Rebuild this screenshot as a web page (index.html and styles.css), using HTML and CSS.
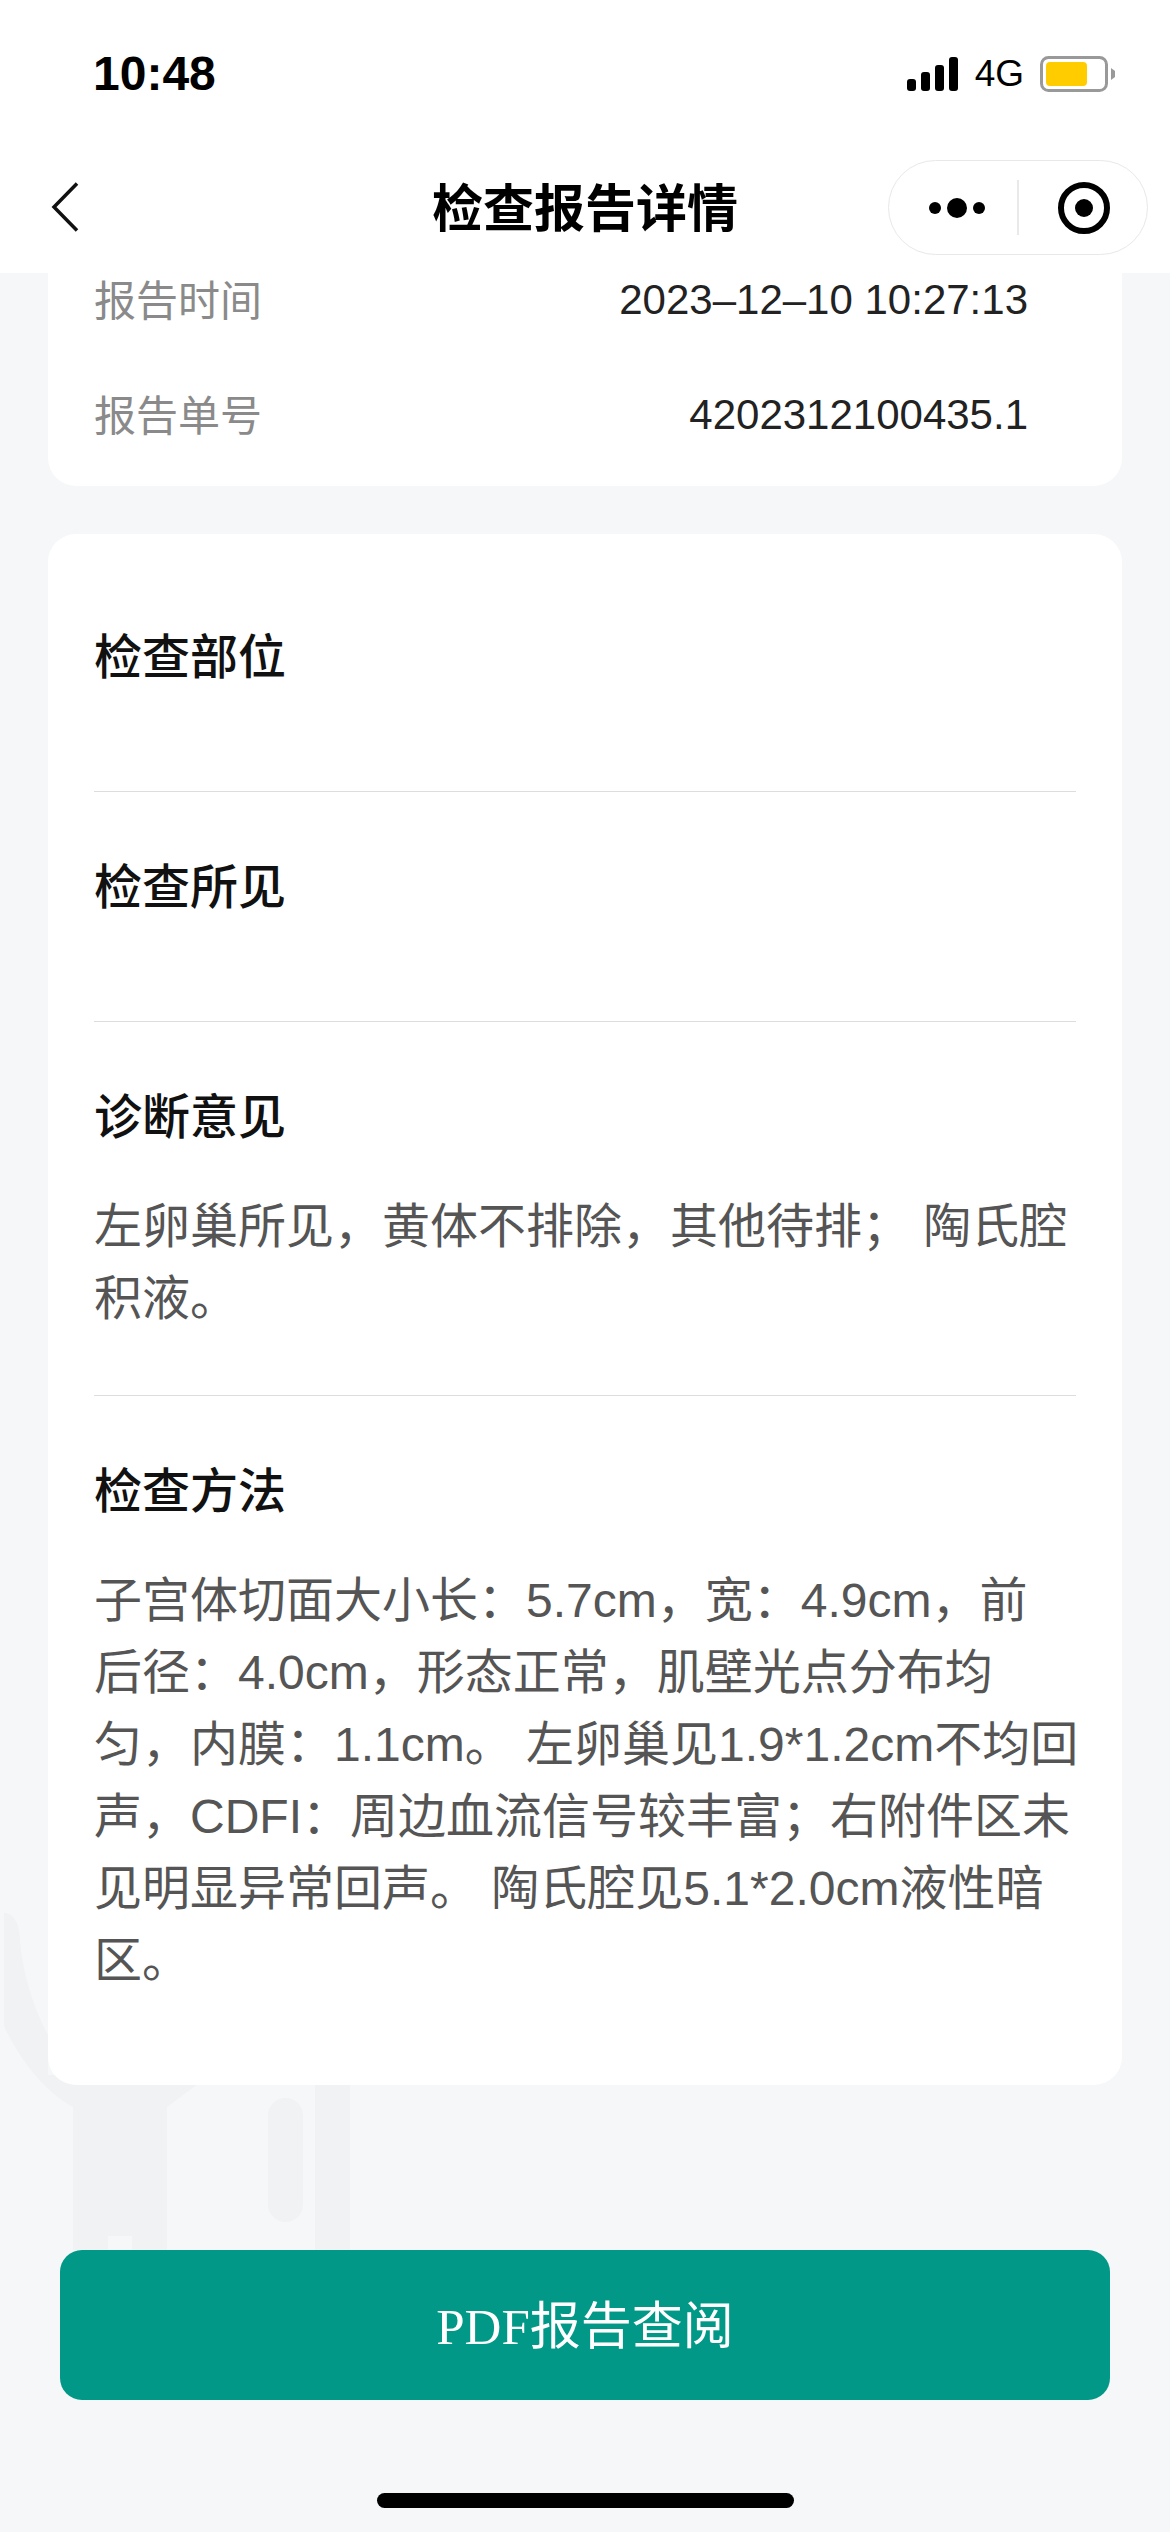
FILE: index.html
```html
<!DOCTYPE html>
<html lang="zh-CN">
<head>
  <meta charset="utf-8">
  <title>检查报告详情</title>
  <link rel="stylesheet" href="styles.css">
</head>
<body>
  <div id="app-container">
    <div class="app-header">
      <div class="status-bar">
        <div class="status-time">10:48</div>
        <div class="status-icons">
          <svg class="icon-signal" width="51" height="34" viewBox="0 0 51 34">
            <rect x="0" y="22" width="9" height="12" rx="3"/>
            <rect x="14" y="15" width="9" height="19" rx="3"/>
            <rect x="28" y="8" width="9" height="26" rx="3"/>
            <rect x="42" y="0" width="9" height="34" rx="3"/>
          </svg>
          <span class="status-net">4G</span>
          <svg class="icon-battery" width="75" height="36" viewBox="0 0 75 36">
            <rect x="1.500" y="1.500" width="65" height="33" rx="7" fill="none" stroke="#999" stroke-width="3"/>
            <rect x="6" y="6" width="41" height="24" rx="4" fill="#ffcc00"/>
            <path d="M71 12 L75 15 V21 L71 24 Z" fill="#999"/>
          </svg>
        </div>
      </div>
      <div class="nav-bar">
        <svg class="nav-back" width="28" height="50" viewBox="0 0 28 50">
          <path d="M26 1.500 L3 25 L26 48.500" fill="none" stroke="#111" stroke-width="3.500"/>
        </svg>
        <div class="nav-title">检查报告详情</div>
        <div class="capsule">
          <svg width="260" height="95" viewBox="0 0 260 95">
            <circle cx="47" cy="48" r="6"/>
            <circle cx="69" cy="48" r="10"/>
            <circle cx="91" cy="48" r="6"/>
            <rect x="129.500" y="20" width="1" height="55" fill="#d4d4d4"/>
            <circle cx="196" cy="48" r="23" fill="none" stroke="#000" stroke-width="6"/>
            <circle cx="196" cy="48" r="9"/>
          </svg>
        </div>
      </div>
    </div>

    <div class="content">
      <!-- Fondo decorativo -->
      <svg class="watermark" width="360" height="350" viewBox="0 1900 360 350">
        <path d="M4 1913 C14 1913 20 1925 20 1940 C22 1970 32 2005 48 2035 L48 2075 L210 2075 L167 2107 L167 2250 L73 2250 L73 2107 C45 2092 20 2060 4 2026 Z" fill="#f1f2f4"/>
        <rect x="108" y="2236" width="24" height="14" fill="#f6f7f9"/>
        <rect x="268" y="2098" width="35" height="124" rx="17.500" fill="#f1f2f4"/>
        <rect x="315" y="2075" width="35" height="175" fill="#f1f2f4"/>
      </svg>

      <div class="card card-info">
        <div class="info-row">
          <div class="info-label">报告时间</div>
          <div class="info-value">2023–12–10 10:27:13</div>
        </div>
        <div class="info-row">
          <div class="info-label">报告单号</div>
          <div class="info-value">4202312100435.1</div>
        </div>
      </div>

      <div class="card card-report">
        <div class="section">
          <div class="section-title">检查部位</div>
        </div>
        <div class="section">
          <div class="section-title">检查所见</div>
        </div>
        <div class="section">
          <div class="section-title">诊断意见</div>
          <div class="section-text">左卵巢所见，黄体不排除，其他待排； 陶氏腔<br>积液。</div>
        </div>
        <div class="section">
          <div class="section-title">检查方法</div>
          <div class="section-text">子宫体切面大小长：5.7cm，宽：4.9cm，前<br>后径：4.0cm，形态正常，肌壁光点分布均<br>匀，内膜：1.1cm。 左卵巢见1.9*1.2cm不均回<br>声，CDFI：周边血流信号较丰富；右附件区未<br>见明显异常回声。 陶氏腔见5.1*2.0cm液性暗<br>区。</div>
        </div>
      </div>
    </div>

    <div class="footer">
      <button class="pdf-btn">PDF报告查阅</button>
      <div class="home-bar"></div>
    </div>
  </div>
</body>
</html>
```

FILE: styles.css
```css
:root {
  --bg: #f6f7f9;
  --green: #029887;
  --label: #8a8a8a;
  --text: #555;
  --dark: #111;
}

* {
  box-sizing: border-box;
  margin: 0;
  padding: 0;
}

html, body {
  height: 100%;
  width: 100%;
  overflow: hidden;
  font-family: "Liberation Sans", "Noto Sans CJK SC", sans-serif;
  background-color: var(--bg);
  color: var(--dark);
}

#app-container {
  display: flex;
  flex-direction: column;
  height: 2532px;
}

/* Header */
.app-header {
  height: 273px;
  background-color: #fff;
}

.status-bar {
  display: flex;
  justify-content: space-between;
  height: 141px;
  padding: 46px 55px 0 93px;
}

.status-time {
  font-size: 48px;
  font-weight: 700;
  line-height: 56px;
  color: #000;
}

.status-icons {
  display: flex;
  align-items: flex-start;
  padding-top: 10px;
}

.icon-signal {
  margin-top: 1px;
}

.status-net {
  margin: 0 16px 0 17px;
  font-size: 37px;
  line-height: 36px;
  color: #000;
}

.nav-bar {
  display: grid;
  grid-template-columns: 1fr auto 1fr;
  align-items: center;
  height: 132px;
  padding: 0 22px;
}

.nav-back {
  margin-left: 29px;
}

.nav-title {
  margin-bottom: 5px;
  font-size: 51px;
  font-weight: 700;
  color: #000;
}

.capsule {
  justify-self: end;
  display: flex;
  width: 260px;
  height: 95px;
  border: 1px solid #e8e8e8;
  border-radius: 48px;
  overflow: hidden;
}

.capsule svg {
  flex: none;
  margin: -1px;
}

/* Content */
.content {
  position: relative;
  flex: 1;
  overflow: hidden;
  padding: 0 48px;
}

.watermark {
  position: absolute;
  left: 0;
  bottom: 0;
}

.card {
  position: relative;
  background-color: #fff;
  border-radius: 28px;
}

.card-info {
  margin-top: -31px;
  padding: 0 94px 14px 46px;
}

.info-row {
  display: flex;
  justify-content: space-between;
  align-items: center;
  height: 115px;
  font-size: 42px;
}

.info-label {
  margin-bottom: 4px;
  color: var(--label);
}

.info-value {
  color: #222;
}

.card-report {
  margin-top: 48px;
  padding: 28px 46px;
}

.section {
  padding: 60px 0;
  border-bottom: 1px solid #ddd;
}

.section:last-child {
  border-bottom: none;
}

.section-title {
  font-size: 48px;
  font-weight: 500;
  line-height: 72px;
  margin-bottom: 37px;
}

.section-text {
  font-size: 48px;
  line-height: 72px;
  white-space: nowrap;
  color: var(--text);
}

/* Footer */
.footer {
  height: 282px;
  padding: 0 60px;
}

.pdf-btn {
  display: block;
  width: 100%;
  height: 150px;
  padding-bottom: 6px;
  border: none;
  border-radius: 22px;
  background-color: var(--green);
  color: #fff;
  font-family: "Liberation Serif", "Noto Sans CJK SC", serif;
  font-size: 51px;
}

.home-bar {
  width: 417px;
  height: 15px;
  margin: 93px auto 0;
  border-radius: 8px;
  background-color: #000;
}
```
